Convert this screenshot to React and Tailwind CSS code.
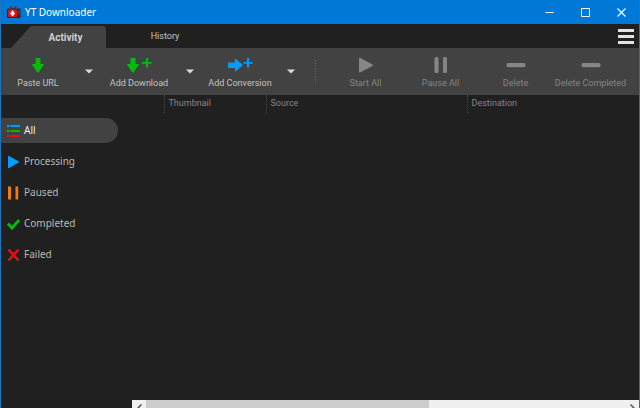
import React, { useState } from 'react';

const ArrowDown = ({ plus }) => (
  <svg width={plus ? 26 : 14} height="16" viewBox={plus ? '0 0 26 16' : '0 0 14 16'} fill="#08b80c">
    <path d="M4.5 1.5Q4.5 1 5 1H9Q9.5 1 9.500 1.500V7H13.300L7.800 15.200Q7 16 6.200 15.200L.7 7H4.500Z" />
    {plus && <path d="M20 1h2v4h3.500v1.800H22v3.700h-2V6.800h-4V5h4Z" />}
  </svg>
);

const ArrowRight = () => (
  <svg width="26" height="16" viewBox="0 0 26 16" fill="#069cff">
    <path d="M1 6Q1 5.500 1.500 5.500H8V2Q8 1.400 8.800 1.900L15.300 7.400Q16 8 15.300 8.700L8.800 14.200Q8 14.700 8 14V11H1.500Q1 11 1 10.500Z" />
    <path d="M20 1h2v4h3.700v1.800H22v3.700h-2V6.800h-3.500V5H20Z" />
  </svg>
);

const PlayIcon = () => (
  <svg width="16" height="16" viewBox="0 0 16 16" fill="#858585">
    <path d="M1 2Q1 .3 2.500 1L14.500 7.500Q15.700 8.200 14.500 9L2.500 15.200Q1 15.800 1 14.500Z" />
  </svg>
);

const PauseIcon = () => (
  <svg width="16" height="16" viewBox="0 0 16 16" fill="#858585">
    <rect x="1.500" y="0" width="4" height="16" rx="1.500" />
    <rect x="10" y="0" width="4" height="16" rx="1.500" />
  </svg>
);

const MinusIcon = () => (
  <svg width="20" height="16" viewBox="0 0 20 16" fill="#858585">
    <rect x=".5" y="6" width="19" height="4.200" rx="1.800" />
  </svg>
);

const Logo = () => (
  <svg width="14" height="13" viewBox="0 0 14 13">
    <path d="M3 .5L5.500 3M9.500 0L7 3" stroke="#5a2a28" strokeWidth="1.200" />
    <rect x="0" y="2.500" width="13.500" height="9.500" rx="1" fill="#3a2426" />
    <rect x="1" y="3.500" width="9" height="7.500" rx="1" fill="#e80f0f" />
    <path d="M5.500 4L8 7.500 5.500 10.500 3 7.500Z" fill="#fff" />
    <path d="M11 5h1.500M11 7h1.500" stroke="#8a7070" strokeWidth=".8" />
  </svg>
);

const filters = [
  {
    name: 'All',
    icon: (
      <>
        <path d="M0 2h2.500M3.500 2h9.500" stroke="#069cff" strokeWidth="2" />
        <path d="M0 7h2.500M3.500 7h9.500" stroke="#08b80c" strokeWidth="2" />
        <path d="M0 12h2.500M3.500 12h9.500" stroke="#f00d0d" strokeWidth="2" />
      </>
    ),
  },
  { name: 'Processing', icon: <path d="M1 1.300Q1 .4 2 .9L11.800 6.500Q12.400 7 11.800 7.500L2 13.100Q1 13.500 1 12.700Z" fill="#069cff" /> },
  { name: 'Paused', icon: <path d="M1 .5h3v13H1zM8.500 .5h2.700v13H8.500z" fill="#f27a12" /> },
  { name: 'Completed', icon: <path d="M1 6.500L5 11 12.200 3" fill="none" stroke="#08b80c" strokeWidth="3" /> },
  { name: 'Failed', icon: <path d="M1.500 1.500L11.500 12.500M11.500 1.500L1.500 12.500" stroke="#e80f0f" strokeWidth="2.500" /> },
];

const addActions = [
  { name: 'Paste URL', icon: <ArrowDown /> },
  { name: 'Add Download', icon: <ArrowDown plus /> },
  { name: 'Add Conversion', icon: <ArrowRight /> },
];

const queueActions = [
  { name: 'Start All', icon: <PlayIcon /> },
  { name: 'Pause All', icon: <PauseIcon /> },
  { name: 'Delete', icon: <MinusIcon /> },
  { name: 'Delete Completed', icon: <MinusIcon /> },
];

const TitleBar = () => (
  <header className="flex h-6 shrink-0 items-center bg-[#0078d7] pl-1.5 text-white">
    <Logo />
    <h1 className="ml-1 text-[10px]">YT Downloader</h1>
    <div className="ml-auto flex h-full">
      <button aria-label="Minimize" className="flex w-9 items-center justify-center">
        <svg width="9" height="9" viewBox="0 0 9 9"><path d="M.5 4.500h8" stroke="#fff" /></svg>
      </button>
      <button aria-label="Maximize" className="flex w-9 items-center justify-center">
        <svg width="9" height="9" viewBox="0 0 9 9"><path d="M.5.5h8v8h-8z" fill="none" stroke="#fff" /></svg>
      </button>
      <button aria-label="Close" className="flex w-9 items-center justify-center">
        <svg width="9" height="9" viewBox="0 0 9 9"><path d="M.5.5l8 8M8.500.5l-8 8" stroke="#fff" strokeWidth="1.200" /></svg>
      </button>
    </div>
  </header>
);

const TabBar = () => (
  <nav className="flex h-6 shrink-0 items-end pl-2.5 pr-1 font-['Roboto',sans-serif]">
    <button className="h-[22px] w-[95px] rounded-tr-[3px] bg-[#424242] pl-3.5 font-bold text-[#d0d0d0] [clip-path:polygon(0_100%,20px_0,100%_0,100%_100%)]">
      Activity
    </button>
    <button className="h-[22px] w-[118px] text-[9px] text-[#c4c4c4]">History</button>
    <button aria-label="Menu" className="ml-auto flex h-full w-[18px] flex-col items-center justify-center gap-[3px]">
      <span className="h-[3px] w-4 bg-[#e2e2e2]" />
      <span className="h-[3px] w-4 bg-[#e2e2e2]" />
      <span className="h-[3px] w-4 bg-[#e2e2e2]" />
    </button>
  </nav>
);

const Toolbar = () => (
  <div className="flex h-[47px] shrink-0 bg-[#424242] font-['Roboto',sans-serif] text-[9px]">
    {addActions.map((action) => (
      <div key={action.name} className="flex">
        <button className="flex w-[74px] flex-col items-center gap-1 whitespace-nowrap pt-[9px] leading-3 text-[#c4c4c4]">
          {action.icon}
          {action.name}
        </button>
        <button aria-label={`${action.name} options`} className="flex w-[27px] items-center justify-center">
          <svg width="8" height="5" viewBox="0 0 8 5"><path d="M0 .5h8L4 4.500Z" fill="#dcdcdc" /></svg>
        </button>
      </div>
    ))}
    <div className="ml-[11px] mr-3 h-6 self-center border-l border-dotted border-[#606060]" />
    {queueActions.map((action) => (
      <button key={action.name} disabled className="flex w-[75px] shrink-0 flex-col items-center gap-1 whitespace-nowrap pt-[9px] leading-3 text-[#858585]">
        {action.icon}
        {action.name}
      </button>
    ))}
  </div>
);

const App = () => {
  const [filter, setFilter] = useState('All');

  return (
    <div className="flex h-screen flex-col overflow-hidden border-x border-[#1f74bd] bg-[#202020] font-['Noto_Sans',sans-serif] text-[10px]">
      <TitleBar />
      <TabBar />
      <Toolbar />

      <main className="flex min-h-0 flex-1">
        {/* Status filters */}
        <aside className="flex w-[131px] shrink-0 flex-col gap-1.5 pr-3.5 pt-[23px]">
          {filters.map((item) => (
            <button
              key={item.name}
              onClick={() => setFilter(item.name)}
              className={`flex h-[25px] items-center gap-1 rounded-r-full pl-1.5 ${
                filter === item.name ? 'bg-[#424242] text-[#eeeeee]' : 'text-[#b8b8b8]'
              }`}
            >
              <svg width="13" height="14" viewBox="0 0 13 14">{item.icon}</svg>
              {item.name}
            </button>
          ))}
        </aside>

        {/* Download list */}
        <section className="flex min-w-0 flex-1 flex-col">
          <div className="flex-1">
            <table className="w-full table-fixed text-left font-['Roboto',sans-serif] text-[9px] text-[#858585]">
              <thead>
                <tr className="h-[18px]">
                  <td className="w-8" />
                  <th className="w-[102px] border-l border-dotted border-[#484848] pl-1 font-normal">Thumbnail</th>
                  <th className="w-[201px] border-l border-dotted border-[#484848] pl-1 font-normal">Source</th>
                  <th className="border-l border-dotted border-[#484848] pl-1 font-normal">Destination</th>
                </tr>
              </thead>
            </table>
          </div>
          <div className="h-2 shrink-0 overflow-hidden">
            <div className="flex h-4 bg-[#f0f0f0]">
              <button aria-label="Scroll left" className="flex w-3.5 items-center justify-center">
                <svg width="5" height="8" viewBox="0 0 5 8"><path d="M4.500.5L1 4l3.500 3.500" fill="none" stroke="#505050" strokeWidth="1.500" /></svg>
              </button>
              <div className="flex-1">
                <div className="h-full w-[59%] bg-[#cdcdcd]" />
              </div>
              <button aria-label="Scroll right" className="flex w-3.5 items-center justify-center">
                <svg width="5" height="8" viewBox="0 0 5 8"><path d="M.5.5L4 4 .5 7.500" fill="none" stroke="#505050" strokeWidth="1.500" /></svg>
              </button>
            </div>
          </div>
        </section>
      </main>
    </div>
  );
};

export default App;
